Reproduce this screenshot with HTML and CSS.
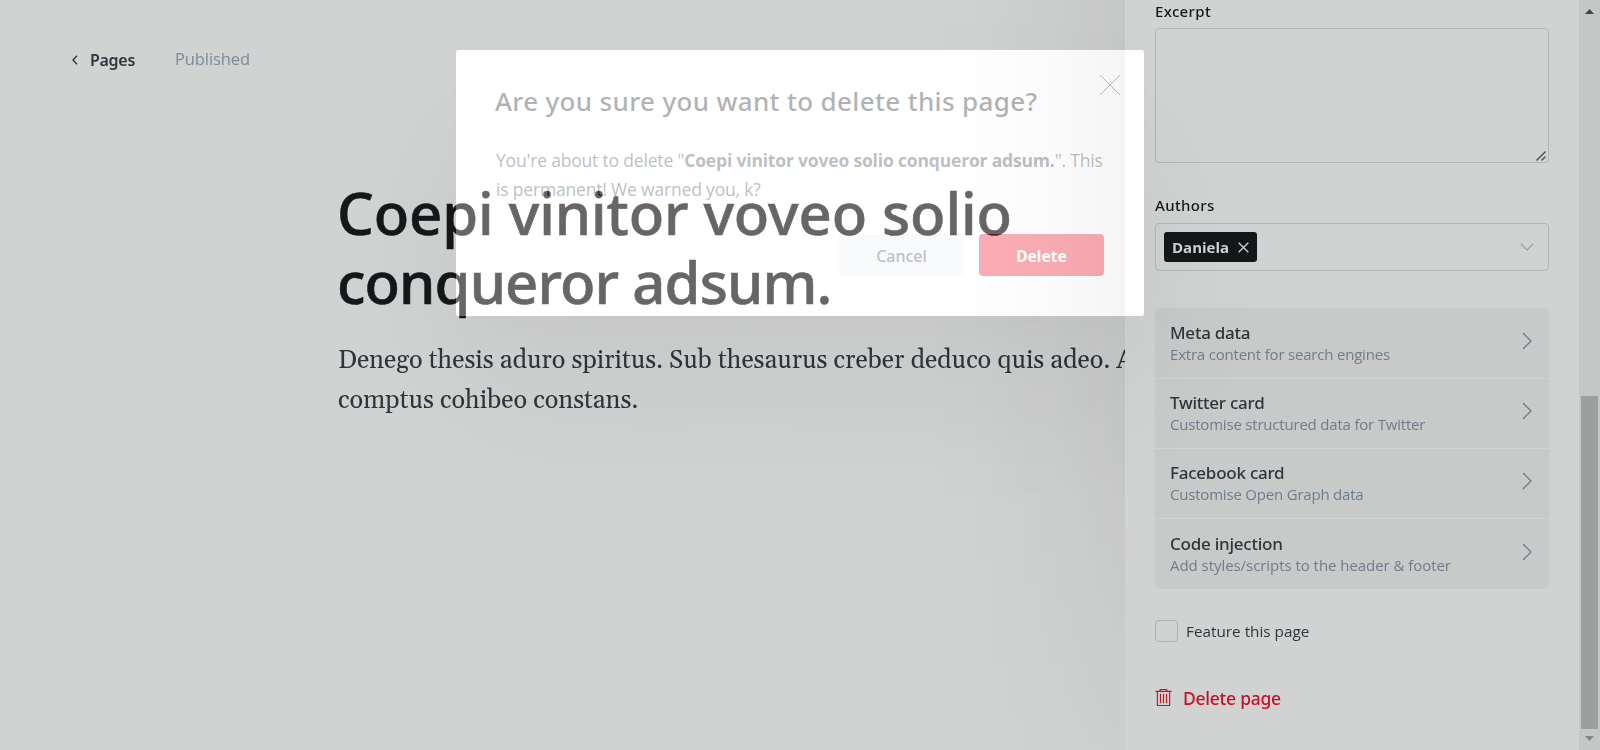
FILE: index.html
```html
<!DOCTYPE html>
<html lang="en">
<head>
<meta charset="utf-8">
<title>Pages</title>
<link rel="stylesheet" href="styles.css">
</head>
<body>
<div class="app">
  <main class="editor">
    <header class="topbar">
      <a class="back"><svg class="back-icon" viewBox="0 0 6 10"><path d="M5 .8 1 5l4 4.200"/></svg>Pages</a>
      <span class="status">Published</span>
    </header>
    <article class="post">
      <h1 class="post-title"><span class="title-a">Coepi vinitor voveo solio</span><br><span class="title-b">conqueror adsum.</span></h1>
      <p class="post-body">Denego thesis aduro spiritus. Sub thesaurus creber deduco quis adeo. A<br>comptus cohibeo constans.</p>
    </article>
  </main>

  <aside class="settings">
    <label class="label">Excerpt</label>
    <div class="textarea"><svg class="grip" viewBox="0 0 10 10"><path d="M.5 9.500 9.500.5M5.500 9.500l4-4"/></svg></div>
    <label class="label label-authors">Authors</label>
    <div class="select">
      <span class="token">Daniela<svg class="token-x" viewBox="0 0 11 11"><path d="m.7.7 9.600 9.600M10.300.7.7 10.300"/></svg></span>
      <svg class="chev-down" viewBox="0 0 14 8"><path d="m.7.7 6.300 6.300L13.300.7"/></svg>
    </div>
    <ul class="menu">
      <li class="item item-first"><div><b>Meta data</b><span>Extra content for search engines</span></div><svg class="chev" viewBox="0 0 10 18"><path d="m1 1 8 8-8 8"/></svg></li>
      <li class="item"><div><b>Twitter card</b><span>Customise structured data for Twitter</span></div><svg class="chev" viewBox="0 0 10 18"><path d="m1 1 8 8-8 8"/></svg></li>
      <li class="item"><div><b>Facebook card</b><span>Customise Open Graph data</span></div><svg class="chev" viewBox="0 0 10 18"><path d="m1 1 8 8-8 8"/></svg></li>
      <li class="item item-last"><div><b>Code injection</b><span class="wide">Add styles/scripts to the header &amp; footer</span></div><svg class="chev" viewBox="0 0 10 18"><path d="m1 1 8 8-8 8"/></svg></li>
    </ul>
    <div class="feature"><i class="box"></i>Feature this page</div>
    <div class="remove"><svg class="trash" viewBox="0 0 18 18"><path d="M.5 2.500h17M5.500 2.500v-2h7v2M2.500 2.500v15h13v-15M5.800 5v10M9 5v10M12.200 5v10"/></svg>Delete page</div>
  </aside>

  <div class="scrollbar">
    <svg class="arrow" viewBox="0 0 9 5"><path d="M0 5 4.500 0 9 5z"/></svg>
    <div class="track"><div class="thumb"></div></div>
    <svg class="arrow arrow-down" viewBox="0 0 9 5"><path d="M0 0 4.500 5 9 0z"/></svg>
  </div>
</div>

<div class="modal">
  <div class="modal-content">
    <div class="modal-head">
      <h2>Are you sure you want to delete this page?</h2>
      <svg class="close" viewBox="0 0 20 20"><path d="m0 0 20 20M20 0 0 20"/></svg>
    </div>
    <p>You're about to delete "<strong>Coepi vinitor voveo solio conqueror adsum.</strong>". This<br>is permanent! We warned you, k?</p>
    <div class="actions"><span class="btn">Cancel</span><span class="btn btn-red">Delete</span></div>
  </div>
</div>
</body>
</html>
```
FILE: styles.css
```css
* { box-sizing: border-box; }
body { margin: 0; height: 750px; overflow: hidden; position: relative; background: #d1d3d2; font-family: "Open Sans", "Noto Sans", sans-serif; color: #15171a; }
svg { fill: none; flex: none; display: block; }
.app { display: flex; height: 750px; }

.editor { flex: 1; min-width: 0; white-space: nowrap; }
.topbar { display: flex; align-items: center; height: 24px; margin: 48px 0 0 72px; }
.back { display: flex; align-items: center; gap: 12px; width: 103px; font: 600 16px/24px "Noto Sans", sans-serif; letter-spacing: -.3px; color: #30343c; }
.back-icon { width: 6px; height: 10px; stroke: #30343c; stroke-width: 1.4; }
.status { font-size: 16.5px; line-height: 24px; letter-spacing: -.1px; color: #7c8b9a; margin-top: -2px; }
.post { margin: 107px 0 0 337px; }
.post-title { margin: 0; font: 500 58px/68.5px "Noto Sans", sans-serif; -webkit-text-stroke: .6px #15171a; }
.title-a { letter-spacing: -.1px; }
.title-b { letter-spacing: -.9px; }
.post-body { margin: 25px 0 0 1px; font: 25.26px/40px Gelasio, Georgia, serif; color: #30343c; }

.settings { position: relative; width: 454px; padding: 0 30px; background: #d1d3d2; }
/* soft edge shade cast on the editor */
.settings::before { content: ""; position: absolute; top: 0; bottom: 0; right: 100%; width: 210px; background: linear-gradient(to left, rgba(0, 0, 0, .055), rgba(0, 0, 0, .033) 25%, rgba(0, 0, 0, .016) 50%, rgba(0, 0, 0, .005) 75%, transparent); -webkit-mask-image: linear-gradient(#000 60%, rgba(0, 0, 0, .3)); mask-image: linear-gradient(#000 60%, rgba(0, 0, 0, .3)); }
.label { display: block; height: 28px; font: 500 15px/22px "Noto Sans", sans-serif; letter-spacing: .35px; }
.label-authors { margin-top: 31px; height: 29px; }
.textarea { display: flex; justify-content: flex-end; align-items: flex-end; height: 135px; padding: 0 2px 1px 0; border: 1px solid #b5b7b7; border-radius: 4px; }
.grip { width: 10px; height: 10px; stroke: #484a4a; stroke-width: 1.4; }
.select { display: flex; align-items: center; justify-content: space-between; height: 48px; padding: 0 14px 0 8px; border: 1px solid #b5b7b7; border-radius: 4px; }
.token { display: flex; align-items: center; gap: 9px; height: 30px; padding: 0 8px 0 8px; border-radius: 3px; background: #15171a; color: #d1d3d2; font-size: 15px; font-weight: 700; }
.token-x { width: 11px; height: 11px; stroke: #d1d3d2; stroke-width: 1.3; }
.chev-down { width: 14px; height: 8px; stroke: #949da6; stroke-width: 1.2; }
.menu { list-style: none; margin: 37px 0 0; padding: 0; border-radius: 4px; background: #c8cac9; }
.item { display: flex; align-items: center; justify-content: space-between; height: 70px; padding: 0 17px 0 15px; border-bottom: 1px solid #d1d3d2; }
.item-first { height: 71px; }
.item-last { border: 0; padding-top: 1px; }
.item b { display: block; font: 500 17px/22px "Noto Sans", sans-serif; letter-spacing: -.24px; color: #30343c; }
.item span { display: block; font-size: 15px; line-height: 21px; letter-spacing: -.2px; color: #6f7d8b; }
.item .wide { letter-spacing: -.05px; }
.chev { width: 10px; height: 18px; margin-top: -5px; stroke: #6f7d8b; stroke-width: 1.3; }
.feature { display: flex; align-items: center; gap: 8px; height: 24px; margin-top: 30px; font-size: 15.3px; color: #30343c; }
.box { width: 23px; height: 22px; border: 1px solid #acb0b4; border-radius: 4px; }
.remove { display: flex; align-items: center; gap: 11px; height: 24px; margin-top: 43px; font: 500 17.5px/24px "Noto Sans", sans-serif; letter-spacing: -.25px; color: #c90f28; }
.trash { width: 17px; height: 17px; margin-top: -2px; stroke: #c90f28; stroke-width: 1.2; }

.scrollbar { position: relative; display: flex; flex-direction: column; align-items: center; width: 21px; padding: 9px 0 9px; background: #c5c7c6; }
.arrow { width: 9px; height: 5px; fill: #424444; }
.arrow-down { fill: #858786; margin-top: 7px; }
.track { flex: 1; display: flex; align-items: flex-end; }
.thumb { width: 17px; height: 333px; background: #9d9f9e; }

.modal { position: absolute; left: 456px; top: 50px; width: 688px; height: 266px; border-radius: 3px; backdrop-filter: grayscale(1) brightness(1.215); box-shadow: 0 75px 150px rgba(16, 0, 4, .05), 0 14px 40px rgba(16, 0, 4, .02); }
.modal-content { height: 266px; padding: 24px 40px 40px; border-radius: 3px; background: #fff; opacity: .33; }
.modal-head { display: flex; justify-content: space-between; margin: 0 -16px 0 -1px; }
h2 { margin: 9px 0 0; font: 500 26px/36px "Noto Sans", sans-serif; letter-spacing: .34px; }
.close { width: 20px; height: 20px; margin-top: 1px; stroke: #3f4448; }
.modal p { margin: 27px 0 0; font-size: 17.5px; line-height: 29px; letter-spacing: -.18px; color: #394047; white-space: nowrap; }
.actions { display: flex; justify-content: flex-end; gap: 15px; margin-top: 30px; }
.btn { width: 125px; height: 42px; border-radius: 4px; background: #e9eef4; font: 500 16px/44px "Noto Sans", sans-serif; text-align: center; color: #394047; }
.btn-red { background: #f50b23; color: #fff; font-size: 15.5px; font-weight: 680; }
```
